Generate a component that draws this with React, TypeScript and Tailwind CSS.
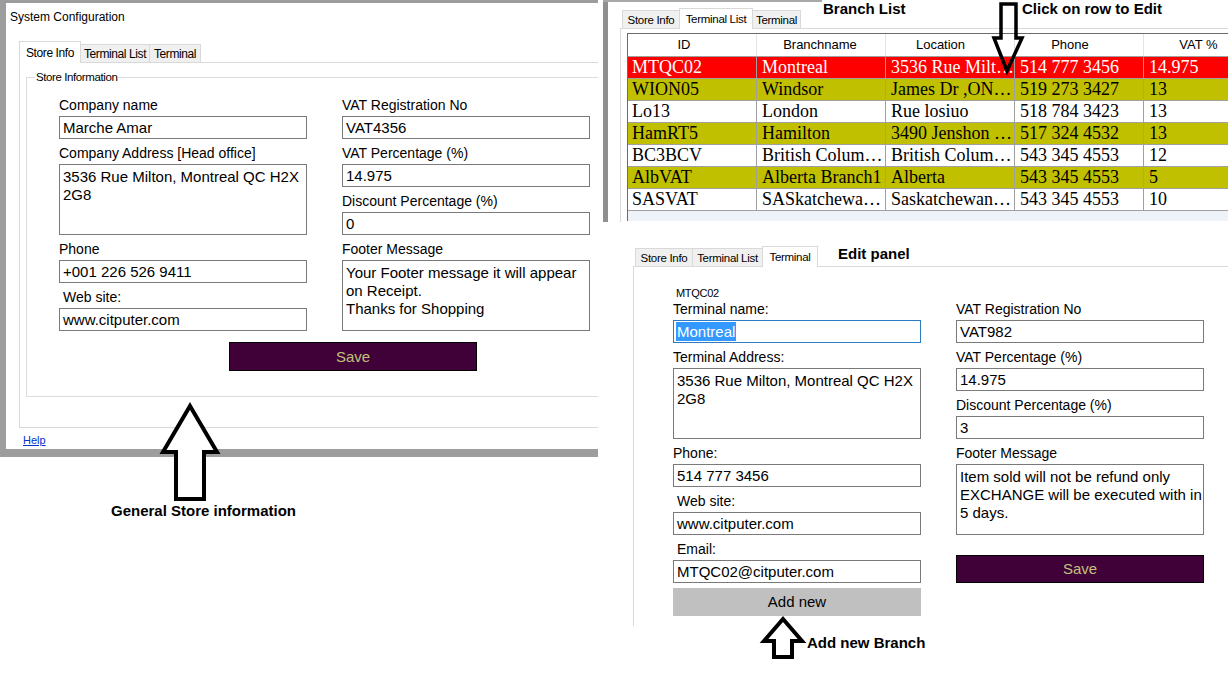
import React from "react";

type TabProps = { children: React.ReactNode; w: string; selected?: boolean };

function Tab({ children, w, selected }: TabProps) {
  return (
    <div
      className={
        selected
          ? `${w} shrink-0 relative z-10 -mr-px mb-[-1px] h-[21px] border border-b-0 border-[#d9d9d9] bg-white flex items-center justify-center text-[11.5px] leading-[14px] tracking-[-0.3px] text-black`
          : `${w} shrink-0 -mr-px h-[18px] border border-b-0 border-[#d9d9d9] bg-[#f0f0f0] flex items-center justify-center text-[11.5px] leading-[14px] tracking-[-0.3px] text-black`
      }
    >
      {children}
    </div>
  );
}

function TabBig({ children, w, selected }: TabProps) {
  return (
    <div
      className={
        selected
          ? `${w} shrink-0 relative z-10 -mr-px mb-[-1px] h-[22px] border border-b-0 border-[#d9d9d9] bg-white flex items-center justify-center text-[12px] leading-[14px] tracking-[-0.4px] text-black`
          : `${w} shrink-0 -mr-px h-[18px] border border-b-0 border-[#d9d9d9] bg-[#f0f0f0] flex items-center justify-center text-[12px] leading-[14px] tracking-[-0.4px] text-black`
      }
    >
      {children}
    </div>
  );
}

function Label({ children, tall = true, indent = false }: { children: React.ReactNode; tall?: boolean; indent?: boolean }) {
  return (
    <div
      className={`${tall ? "h-[25px]" : "h-[22px]"} ${indent ? "pl-[4px]" : ""} flex items-end pb-[3px] text-[14px] leading-[16px] text-black whitespace-nowrap`}
    >
      {children}
    </div>
  );
}

function Field({ children }: { children: React.ReactNode }) {
  return (
    <div className="h-[23px] border border-[#7a7a7a] bg-white pl-[3px] text-[15px] leading-[21px] text-black whitespace-nowrap overflow-hidden">
      {children}
    </div>
  );
}

function Area({ lines }: { lines: string[] }) {
  return (
    <div className="h-[71px] border border-[#7a7a7a] bg-white pl-[3px] pt-[3px] text-[15px] leading-[18px] text-black overflow-hidden">
      {lines.map((l, i) => (
        <div key={i} className="whitespace-nowrap">
          {l}
        </div>
      ))}
    </div>
  );
}

function SaveButton({ className }: { className: string }) {
  return (
    <div
      className={`${className} w-[248px] bg-[#400038] border border-black flex items-center justify-center text-[15px] leading-[18px] text-[#c2c27c]`}
    >
      Save
    </div>
  );
}

const rows: { cells: string[]; kind: "red" | "olive" | "white" }[] = [
  { cells: ["MTQC02", "Montreal", "3536 Rue Milt…", "514 777 3456", "14.975"], kind: "red" },
  { cells: ["WION05", "Windsor", "James Dr ,ON…", "519 273 3427", "13"], kind: "olive" },
  { cells: ["Lo13", "London", "Rue losiuo", "518 784 3423", "13"], kind: "white" },
  { cells: ["HamRT5", "Hamilton", "3490 Jenshon …", "517 324 4532", "13"], kind: "olive" },
  { cells: ["BC3BCV", "British Colum…", "British Colum…", "543 345 4553", "12"], kind: "white" },
  { cells: ["AlbVAT", "Alberta Branch1", "Alberta", "543 345 4553", "5"], kind: "olive" },
  { cells: ["SASVAT", "SASkatchewa…", "Saskatchewan…", "543 345 4553", "10"], kind: "white" },
];

const headers = [
  { t: "ID", pr: "pr-[16px]" },
  { t: "Branchname", pr: "pr-[2px]" },
  { t: "Location", pr: "pr-[19px]" },
  { t: "Phone", pr: "pr-[18px]" },
  { t: "VAT %", pr: "pr-[19px]" },
];

export default function App() {
  return (
    <div className="relative w-[1228px] h-[675px] overflow-hidden bg-white font-['Liberation_Sans',Arial,sans-serif] text-black">
      {/* ===== Left window: System Configuration / Store Info ===== */}
      <div className="absolute left-0 top-0 w-[598px] h-[457px] bg-[#9d9d9d] pl-[6px] pt-[3px] pb-[8px]">
        <div className="h-full bg-white overflow-hidden">
          <div className="h-[38px] pl-[4px] pt-[7px] text-[12px] leading-[14px] whitespace-nowrap">System Configuration</div>
          <div className="ml-[13px] h-[21px] flex items-end">
            <TabBig w="w-[62px]" selected>
              Store Info
            </TabBig>
            <TabBig w="w-[70px]">Terminal List</TabBig>
            <TabBig w="w-[52px]">Terminal</TabBig>
          </div>
          <div className="ml-[13px] h-[366px] border-l border-t border-b border-[#d9d9d9] pl-[6px] pt-[14px]">
            <div className="relative h-[320px] border-l border-t border-b border-[#dcdcdc] pl-[32px] pt-[13px]">
              <span className="absolute left-[8px] top-[-8px] bg-white px-[1px] text-[11.5px] leading-[14px] tracking-[-0.4px] whitespace-nowrap">
                Store Information
              </span>
              <div className="flex gap-[35px]">
                <div className="w-[248px] flex flex-col">
                  <Label>Company name</Label>
                  <Field>Marche Amar</Field>
                  <Label>Company Address [Head office]</Label>
                  <Area lines={["3536 Rue Milton, Montreal QC H2X", "2G8"]} />
                  <Label>Phone</Label>
                  <Field>+001 226 526 9411</Field>
                  <Label indent>Web site:</Label>
                  <Field>www.citputer.com</Field>
                </div>
                <div className="w-[248px] flex flex-col">
                  <Label>VAT Registration No</Label>
                  <Field>VAT4356</Field>
                  <Label>VAT Percentage (%)</Label>
                  <Field>14.975</Field>
                  <Label>Discount Percentage (%)</Label>
                  <Field>0</Field>
                  <Label>Footer Message</Label>
                  <Area lines={["Your Footer message it will appear", "on Receipt.", "Thanks for Shopping"]} />
                </div>
              </div>
              <SaveButton className="mt-[11px] ml-[170px] h-[29px]" />
            </div>
          </div>
          <div className="pl-[17px] pt-[5px] text-[11px] leading-[14px]">
            <span className="text-[#0033cc] underline">Help</span>
          </div>
        </div>
      </div>

      {/* ===== Top right: Terminal List ===== */}
      <div className="absolute left-[603px] top-0 w-[625px] h-[222px] bg-white flex flex-col">
        <div className="h-[2px] w-[219px] shrink-0 bg-[#a8a8a8]" />
        <div className="flex flex-1 min-h-0">
          <div className="w-[5px] shrink-0 bg-[#8f8f8f]" />
          <div className="flex-1 min-w-0 flex flex-col">
            <div className="ml-[14px] mt-[6px] h-[20px] flex items-end">
              <Tab w="w-[58px]">Store Info</Tab>
              <Tab w="w-[74px]" selected>
                Terminal List
              </Tab>
              <Tab w="w-[49px]">Terminal</Tab>
            </div>
            <div className="ml-[12px] flex-1 min-w-0 border-l border-t border-[#d9d9d9] pl-[6px] pt-[4px]">
              <div className="h-[188px] bg-[#eef3f9] border-t border-l border-[#6b6b6b] overflow-hidden">
                <div className="flex h-[23px] bg-white border-b border-[#a0a0a0]">
                  {headers.map((h, i) => (
                    <div
                      key={i}
                      className={`w-[129px] shrink-0 border-r border-[#e3e3e3] flex items-center justify-center text-[13px] leading-[16px] whitespace-nowrap ${h.pr}`}
                    >
                      {h.t}
                    </div>
                  ))}
                </div>
                {rows.map((r, ri) => (
                  <div
                    key={ri}
                    className={`flex h-[22px] border-b border-[#a0a0a0] font-['Liberation_Serif','Times_New_Roman',serif] text-[18px] leading-[21px] ${
                      r.kind === "red"
                        ? "bg-[#ff0000] text-white"
                        : r.kind === "olive"
                        ? "bg-[#c0c000] text-black"
                        : "bg-white text-black"
                    }`}
                  >
                    {r.cells.map((c, ci) => (
                      <div
                        key={ci}
                        className={`w-[129px] shrink-0 border-r border-[#a0a0a0] whitespace-nowrap overflow-hidden ${
                          ci === 0 ? "pl-[4px]" : "pl-[5px]"
                        }`}
                      >
                        {c}
                      </div>
                    ))}
                  </div>
                ))}
              </div>
            </div>
          </div>
        </div>
      </div>

      {/* ===== Bottom right: Terminal edit panel ===== */}
      <div className="absolute left-[633px] top-[245px] w-[595px] h-[381px] bg-white flex flex-col">
        <div className="ml-[2px] h-[21px] flex items-end">
          <Tab w="w-[58px]">Store Info</Tab>
          <Tab w="w-[71px]">Terminal List</Tab>
          <Tab w="w-[56px]" selected>
            Terminal
          </Tab>
          <div className="self-start ml-[21px] text-[15px] leading-[17px] font-bold whitespace-nowrap">Edit panel</div>
        </div>
        <div className="h-[360px] border-l border-t border-[#dadada] pl-[39px] pt-[21px]">
          <div className="flex gap-[35px]">
            <div className="w-[248px] flex flex-col">
              <div className="h-[10px] pl-[3px] text-[11px] leading-[10px] tracking-[-0.3px] whitespace-nowrap">MTQC02</div>
              <Label tall={false}>Terminal name:</Label>
              <div className="h-[23px] border border-[#2a7ac4] bg-white pl-[2px] text-[15px] leading-[21px] whitespace-nowrap overflow-hidden">
                <span className="bg-[#3399ff] text-white px-[1px] inline-block leading-[19px]">Montreal</span>
              </div>
              <Label>Terminal Address:</Label>
              <Area lines={["3536 Rue Milton, Montreal QC H2X", "2G8"]} />
              <Label>Phone:</Label>
              <Field>514 777 3456</Field>
              <Label indent>Web site:</Label>
              <Field>www.citputer.com</Field>
              <Label indent>Email:</Label>
              <Field>MTQC02@citputer.com</Field>
              <div className="mt-[5px] h-[28px] bg-[#c0c0c0] flex items-center justify-center text-[15px] leading-[18px]">
                Add new
              </div>
            </div>
            <div className="w-[248px] flex flex-col">
              <div className="h-[10px]" />
              <Label tall={false}>VAT Registration No</Label>
              <Field>VAT982</Field>
              <Label>VAT Percentage (%)</Label>
              <Field>14.975</Field>
              <Label>Discount Percentage (%)</Label>
              <Field>3</Field>
              <Label>Footer Message</Label>
              <Area lines={["Item sold will not be refund only", "EXCHANGE will be executed with in", "5 days."]} />
              <SaveButton className="mt-[20px] h-[28px]" />
            </div>
          </div>
        </div>
      </div>

      {/* ===== Annotations ===== */}
      <div className="absolute left-[823px] top-0 text-[15px] leading-[18px] font-bold whitespace-nowrap">Branch List</div>
      <div className="absolute left-[1022px] top-0 text-[15px] leading-[18px] font-bold whitespace-nowrap">
        Click on row to Edit
      </div>
      <div className="absolute left-[111px] top-[502px] text-[15px] leading-[18px] font-bold whitespace-nowrap">
        General Store information
      </div>
      <div className="absolute left-[807px] top-[634px] text-[15px] leading-[18px] font-bold whitespace-nowrap">
        Add new Branch
      </div>

      {/* Arrows */}
      <svg className="absolute left-0 top-0 pointer-events-none" width="1228" height="675" viewBox="0 0 1228 675">
        <polygon
          points="1001,4 1016,4 1016,38 1022,38 1007,71 994,38 1001,38"
          fill="none"
          stroke="#000"
          strokeWidth="3.5"
          strokeLinejoin="miter"
        />
        <polygon
          points="190,406 217,452 204,452 204,499 176,499 176,452 163,452"
          fill="#fff"
          stroke="#000"
          strokeWidth="4"
          strokeLinejoin="miter"
        />
        <polygon
          points="783,619 802,641 792,641 792,657 774,657 774,641 764,641"
          fill="#fff"
          stroke="#000"
          strokeWidth="4"
          strokeLinejoin="miter"
        />
      </svg>
    </div>
  );
}
